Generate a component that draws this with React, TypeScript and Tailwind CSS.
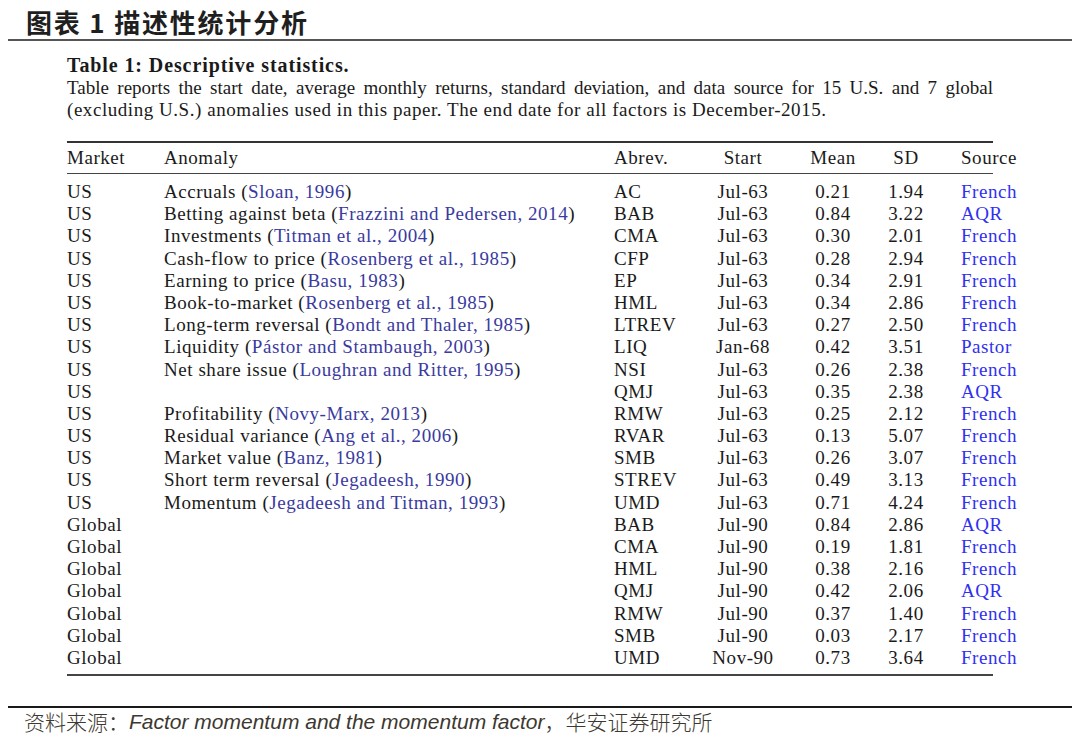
import React from "react";

type Row = [string, string, string, string, string, string, string, string];

const rows: Row[] = [
  ["US", "Accruals", "Sloan, 1996", "AC", "Jul-63", "0.21", "1.94", "French"],
  ["US", "Betting against beta", "Frazzini and Pedersen, 2014", "BAB", "Jul-63", "0.84", "3.22", "AQR"],
  ["US", "Investments", "Titman et al., 2004", "CMA", "Jul-63", "0.30", "2.01", "French"],
  ["US", "Cash-flow to price", "Rosenberg et al., 1985", "CFP", "Jul-63", "0.28", "2.94", "French"],
  ["US", "Earning to price", "Basu, 1983", "EP", "Jul-63", "0.34", "2.91", "French"],
  ["US", "Book-to-market", "Rosenberg et al., 1985", "HML", "Jul-63", "0.34", "2.86", "French"],
  ["US", "Long-term reversal", "Bondt and Thaler, 1985", "LTREV", "Jul-63", "0.27", "2.50", "French"],
  ["US", "Liquidity", "Pástor and Stambaugh, 2003", "LIQ", "Jan-68", "0.42", "3.51", "Pastor"],
  ["US", "Net share issue", "Loughran and Ritter, 1995", "NSI", "Jul-63", "0.26", "2.38", "French"],
  ["US", "", "", "QMJ", "Jul-63", "0.35", "2.38", "AQR"],
  ["US", "Profitability", "Novy-Marx, 2013", "RMW", "Jul-63", "0.25", "2.12", "French"],
  ["US", "Residual variance", "Ang et al., 2006", "RVAR", "Jul-63", "0.13", "5.07", "French"],
  ["US", "Market value", "Banz, 1981", "SMB", "Jul-63", "0.26", "3.07", "French"],
  ["US", "Short term reversal", "Jegadeesh, 1990", "STREV", "Jul-63", "0.49", "3.13", "French"],
  ["US", "Momentum", "Jegadeesh and Titman, 1993", "UMD", "Jul-63", "0.71", "4.24", "French"],
  ["Global", "", "", "BAB", "Jul-90", "0.84", "2.86", "AQR"],
  ["Global", "", "", "CMA", "Jul-90", "0.19", "1.81", "French"],
  ["Global", "", "", "HML", "Jul-90", "0.38", "2.16", "French"],
  ["Global", "", "", "QMJ", "Jul-90", "0.42", "2.06", "AQR"],
  ["Global", "", "", "RMW", "Jul-90", "0.37", "1.40", "French"],
  ["Global", "", "", "SMB", "Jul-90", "0.03", "2.17", "French"],
  ["Global", "", "", "UMD", "Nov-90", "0.73", "3.64", "French"],
];

const serif = "font-['Liberation_Serif','Times_New_Roman',serif]";

function Cells({ r, header }: { r: string[]; header?: boolean }) {
  return (
    <>
      <div className="w-[97px] shrink-0 whitespace-nowrap">{r[0]}</div>
      <div className="w-[450px] shrink-0 whitespace-nowrap">
        {header ? (
          r[1]
        ) : r[1] ? (
          <>
            {r[1]} (<span className="text-[#3a3aa0]">{r[2]}</span>)
          </>
        ) : null}
      </div>
      <div className="w-[86px] shrink-0 whitespace-nowrap">{r[3]}</div>
      <div className="w-[86px] shrink-0 text-center whitespace-nowrap">{r[4]}</div>
      <div className="w-[94px] shrink-0 text-center whitespace-nowrap">{r[5]}</div>
      <div className="w-[52px] shrink-0 text-center whitespace-nowrap">{r[6]}</div>
      <div className={`pl-[29px] shrink-0 whitespace-nowrap ${header ? "" : "text-[#3030f0]"}`}>{r[7]}</div>
    </>
  );
}

export default function App() {
  return (
    <div className="w-[1080px] h-[737px] bg-white overflow-hidden">
      {/* Header title */}
      <div className="pl-[26px] pt-[5px] h-[39px] flex items-center">
        <span className="font-['Noto_Sans_CJK_SC',sans-serif] font-bold text-[26px] leading-[32px] text-[#1f1f1f] tracking-[1.8px]">
          图表 1 描述性统计分析
        </span>
      </div>
      <div className="mx-[8px] h-[2px] bg-[#555555]" />

      {/* Table block */}
      <div className={`${serif} text-[#1a1a1a] text-[19px] tracking-[0.55px] ml-[67px] w-[926px] mt-[13px]`}>
        <div className="font-bold text-[20px] tracking-[0.9px] leading-[23px]">Table 1: Descriptive statistics.</div>
        <div className="leading-[22px] text-justify [text-align-last:justify] whitespace-nowrap w-[926px] tracking-normal">
          Table reports the start date, average monthly returns, standard deviation, and data source for 15 U.S. and 7 global
        </div>
        <div className="leading-[22px] whitespace-nowrap">
          (excluding U.S.) anomalies used in this paper. The end date for all factors is December-2015.
        </div>

        <div className="mt-[20px] h-[2px] bg-[#333333]" />
        <div className="flex items-center h-[30px] pt-[1px]">
          <Cells r={["Market", "Anomaly", "", "Abrev.", "Start", "Mean", "SD", "Source"]} header />
        </div>
        <div className="h-[1px] bg-[#444444]" />
        <div className="pt-[7px]">
          {rows.map((r, i) => (
            <div key={i} className="flex items-center h-[22.2px] leading-[22.2px]">
              <Cells r={r} />
            </div>
          ))}
        </div>
        <div className="mt-[5px] h-[2px] bg-[#444444]" />
      </div>

      {/* Footer */}
      <div className="mx-[8px] mt-[30px] h-[2px] bg-[#1a1a1a]" />
      <div className="pl-[24px] h-[28px] flex items-center text-[#3d3830] text-[21px] whitespace-nowrap">
        <span className="font-['Noto_Sans_CJK_SC',sans-serif] font-light">资料来源：</span>
        <span className="font-['Liberation_Sans',Arial,sans-serif] italic">Factor momentum and the momentum factor</span>
        <span className="font-['Noto_Sans_CJK_SC',sans-serif] font-light">，华安证券研究所</span>
      </div>
    </div>
  );
}
